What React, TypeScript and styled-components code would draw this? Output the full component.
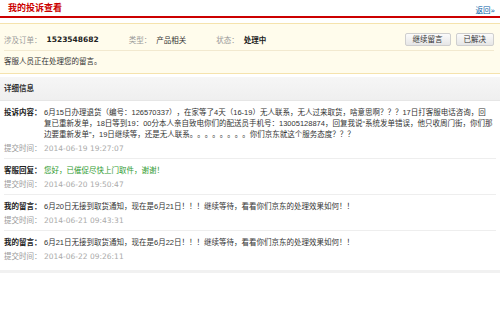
import React from "react";
import styled, { createGlobalStyle } from "styled-components";

const GlobalStyle = createGlobalStyle`
  html, body {
    margin: 0;
    padding: 0;
    background: #fff;
  }
  body {
    font-family: "DejaVu Sans", "Noto Sans CJK SC", sans-serif;
    font-size: 7.5px;
    color: #333;
    text-spacing-trim: space-all;
  }
`;

const Page = styled.div`
  width: 500px;
  overflow: hidden;
`;

const Header = styled.div`
  display: flex;
  justify-content: space-between;
  align-items: center;
  height: 16px;
  padding: 0 5px 0 8px;
  border-bottom: 2px solid #cc0000;
`;

const Title = styled.h1`
  margin: 0;
  font-size: 9px;
  font-weight: bold;
  color: #cc0000;
  line-height: 16px;
`;

const BackLink = styled.a`
  color: #005ea7;
  text-decoration: none;
  font-size: 7.5px;
  padding-top: 3px;
`;

const StatusPanel = styled.div`
  margin-top: 5px;
  background: #fffcec;
  border-top: 1px solid #f5e3ad;
  border-bottom: 1px solid #f5e3ad;
  padding: 0 6px 0 4px;
`;

const InfoRow = styled.div`
  display: flex;
  align-items: center;
  height: 22px;
  padding-top: 4px;
  border-bottom: 1px solid #f2e9cf;
`;

const Field = styled.div`
  display: flex;
  align-items: center;
  gap: 5px;
  margin-right: 30px;
`;

const Label = styled.span`
  color: #999;
`;

const Value = styled.span<{ $strong?: boolean }>`
  color: ${(p) => (p.$strong ? "#222" : "#333")};
  font-weight: ${(p) => (p.$strong ? "bold" : "normal")};
`;

const Actions = styled.div`
  margin-left: auto;
  display: flex;
  gap: 5px;
`;

const ActionButton = styled.button`
  height: 13px;
  padding: 0 7px;
  font-family: inherit;
  font-size: 7.5px;
  line-height: 11px;
  color: #333;
  background: linear-gradient(#fbfbfb, #e6e6e6);
  border: 1px solid #cfcfcf;
  border-radius: 2px;
  cursor: pointer;
`;

const Notice = styled.div`
  height: 22px;
  line-height: 22px;
  color: #333;
`;

const SectionBar = styled.div`
  margin-top: 3px;
  height: 23px;
  line-height: 23px;
  padding: 0 4px;
  background: linear-gradient(#f6f6f6, #efefef);
  border-bottom: 1px solid #e6e6e6;
  font-weight: bold;
  color: #333;
`;

const List = styled.div`
  padding: 0 4px;
  border-bottom: 3px solid #f1f1f1;
`;

const Item = styled.div`
  padding: 6px 0 4px;
  border-bottom: 1px solid #eeeeee;
  &:last-child {
    border-bottom: none;
    padding-bottom: 8px;
  }
`;

const Line = styled.div`
  display: flex;
  line-height: 11px;
`;

const ItemLabel = styled.span`
  flex: 0 0 40px;
  font-weight: bold;
  color: #222;
`;

const ItemText = styled.div<{ $tone?: "reply" }>`
  flex: 1;
  min-width: 0;
  font-family: "Liberation Sans", "Noto Sans CJK SC", sans-serif;
  color: ${(p) => (p.$tone === "reply" ? "#2f9a2f" : "#333")};
`;

const TextLine = styled.div`
  white-space: nowrap;
`;

const TimeLine = styled(Line)`
  margin-top: 3px;
`;

const TimeLabel = styled.span`
  flex: 0 0 40px;
  color: #999;
`;

const TimeValue = styled.span`
  color: #aaa;
`;

type Entry = {
  label: string;
  lines: string[];
  time: string;
  reply?: boolean;
};

const entries: Entry[] = [
  {
    label: "投诉内容：",
    lines: [
      "6月15日办理退货（编号：126570337），在家等了4天（16-19）无人联系，无人过来取货，啥意思啊？？？17日打客服电话咨询，回",
      "复已重新发单，18日等到19：00分本人亲自致电你们的配送员手机号：13005128874，回复我说“系统发单错误，他只收周门街，你们那",
      "边要重新发单”，19日继续等，还是无人联系。。。。。。。。你们京东就这个服务态度？？？",
    ],
    time: "2014-06-19 19:27:07",
  },
  {
    label: "客服回复：",
    lines: ["您好，已催促尽快上门取件，谢谢！"],
    time: "2014-06-20 19:50:47",
    reply: true,
  },
  {
    label: "我的留言：",
    lines: ["6月20日无接到取货通知，现在是6月21日！！！继续等待，看看你们京东的处理效果如何！！"],
    time: "2014-06-21 09:43:31",
  },
  {
    label: "我的留言：",
    lines: ["6月21日无接到取货通知，现在是6月22日！！！继续等待，看看你们京东的处理效果如何！！"],
    time: "2014-06-22 09:26:11",
  },
];

export default function App() {
  return (
    <Page>
      <GlobalStyle />
      <Header>
        <Title>我的投诉查看</Title>
        <BackLink href="#">返回»</BackLink>
      </Header>

      <StatusPanel>
        <InfoRow>
          <Field>
            <Label>涉及订单：</Label>
            <Value $strong>1523548682</Value>
          </Field>
          <Field>
            <Label>类型：</Label>
            <Value>产品相关</Value>
          </Field>
          <Field>
            <Label>状态：</Label>
            <Value $strong>处理中</Value>
          </Field>
          <Actions>
            <ActionButton>继续留言</ActionButton>
            <ActionButton>已解决</ActionButton>
          </Actions>
        </InfoRow>
        <Notice>客服人员正在处理您的留言。</Notice>
      </StatusPanel>

      <SectionBar>详细信息</SectionBar>

      <List>
        {entries.map((e, i) => (
          <Item key={i}>
            <Line>
              <ItemLabel>{e.label}</ItemLabel>
              <ItemText $tone={e.reply ? "reply" : undefined}>
                {e.lines.map((l, j) => (
                  <TextLine key={j}>{l}</TextLine>
                ))}
              </ItemText>
            </Line>
            <TimeLine>
              <TimeLabel>提交时间：</TimeLabel>
              <TimeValue>{e.time}</TimeValue>
            </TimeLine>
          </Item>
        ))}
      </List>
    </Page>
  );
}
